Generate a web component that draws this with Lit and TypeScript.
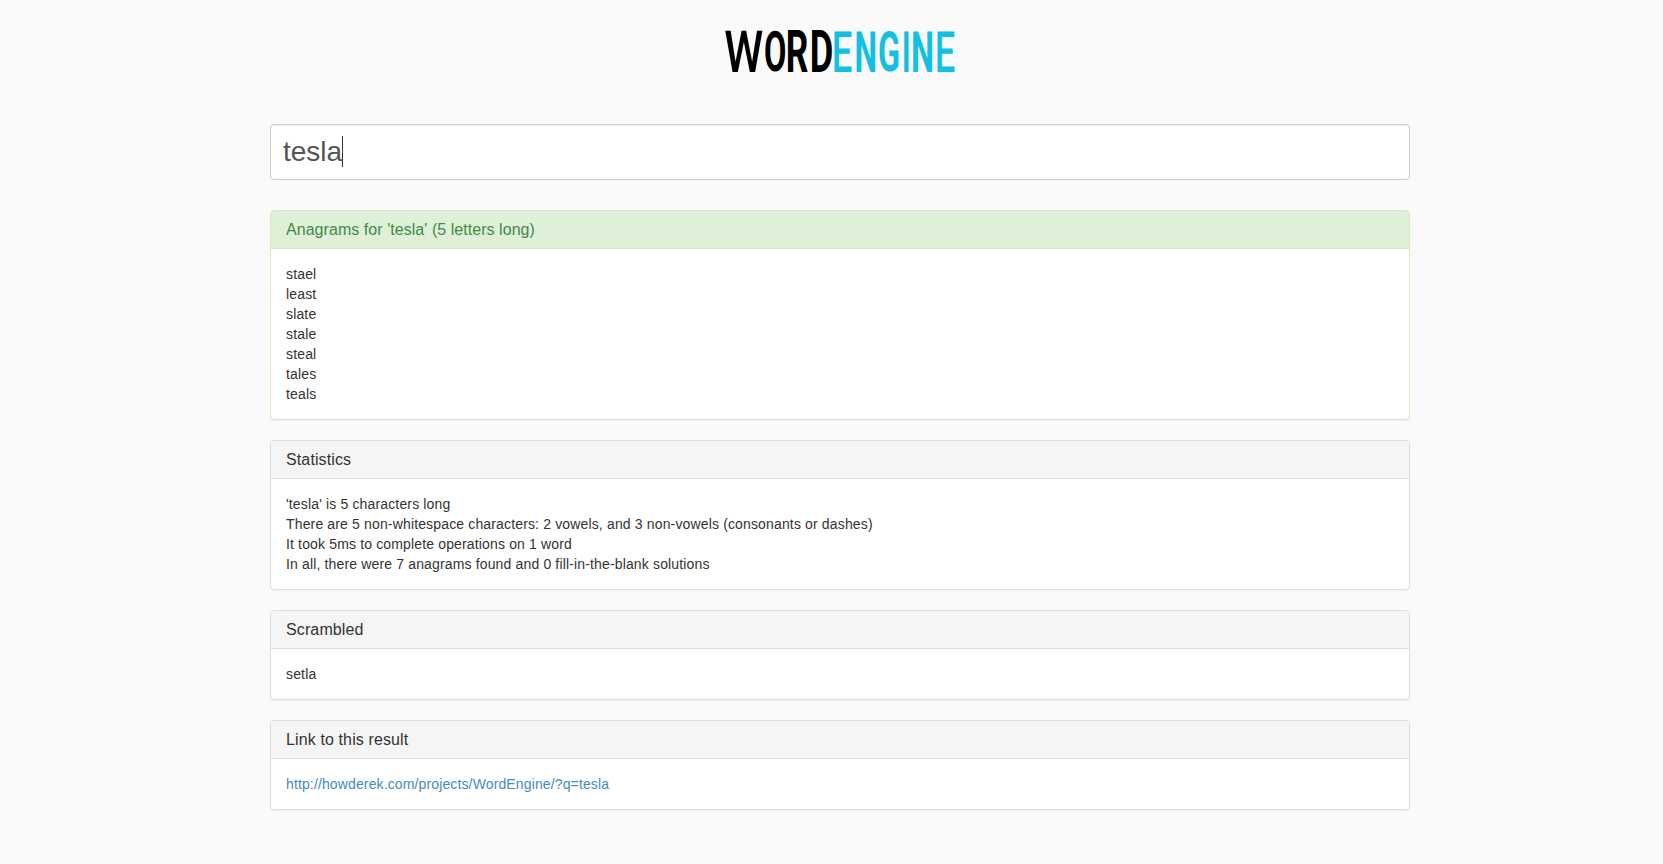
import { LitElement, html, svg, css } from "lit";
import { customElement, property } from "lit/decorators.js";

// Each glyph: character, weight, left edge, drawn width, top edge and bottom edge.
type Glyph = [string, number, number, number, number, number];
const DARK: Glyph[] = [
  ["W", 500, 0, 38, 1.3, 43],
  ["O", 700, 40, 20.3, 1, 43],
  ["R", 700, 63, 19.8, 0.6, 43],
  ["D", 700, 87, 19.8, 0.6, 43],
];
const BRIGHT: Glyph[] = [
  ["E", 500, 109, 17.7, 1.6, 42.6],
  ["N", 700, 131.4, 19, 1.6, 42.6],
  ["G", 700, 154, 19.7, 1.2, 42.8],
  ["I", 700, 178.9, 5, 1.6, 42.6],
  ["N", 700, 188.1, 19.4, 1.6, 42.6],
  ["E", 500, 212, 17.6, 1.6, 42.6],
];
const pen = document.createElement("canvas").getContext("2d")!;

@customElement("word-logo")
class WordLogo extends LitElement {
  static styles = css`
    :host { display: block; width: 230px; height: 46px; }
    svg { display: block; overflow: visible; }
    text { font-family: Roboto, "Liberation Sans", sans-serif; font-size: 58px; text-rendering: geometricPrecision; }
    .dark { fill: #000; }
    .bright { fill: #14c0e2; }
  `;
  glyphs(list: Glyph[]) {
    return list.map(([ch, weight, x, w, top, bottom]) => {
      // Measured large, then reduced to the 58px drawing size for precise ink bounds.
      pen.font = `${weight} 580px Roboto, "Liberation Sans", sans-serif`;
      const m = pen.measureText(ch);
      const left = -m.actualBoundingBoxLeft / 10;
      const right = m.actualBoundingBoxRight / 10;
      const up = m.actualBoundingBoxAscent / 10;
      const down = m.actualBoundingBoxDescent / 10;
      const sx = w / (right - left);
      const sy = (bottom - top) / (up + down);
      return svg`<text font-weight=${weight}
        transform="translate(${x - left * sx} ${bottom - down * sy}) scale(${sx} ${sy})">${ch}</text>`;
    });
  }
  render() {
    return html`<svg width="230" height="46" viewBox="0 0 230 46" role="img" aria-label="WordEngine">
      <g class="dark">${this.glyphs(DARK)}</g>
      <g class="bright">${this.glyphs(BRIGHT)}</g>
    </svg>`;
  }
}

@customElement("result-panel")
class ResultPanel extends LitElement {
  @property() heading = "";
  @property({ type: Boolean, reflect: true }) success = false;
  static styles = css`
    :host {
      display: block;
      box-sizing: border-box;
      border: 1px solid #ddd;
      border-radius: 4px;
      background: #fff;
      box-shadow: 0 1px 1px rgba(0, 0, 0, 0.05);
    }
    .heading {
      padding: 10px 15px;
      border-bottom: 1px solid #ddd;
      border-radius: 3px 3px 0 0;
      background: #f5f5f5;
      color: #333;
      font-size: 16px;
      line-height: 17px;
      letter-spacing: 0.12px;
    }
    .body { padding: 15px; }
    :host([success]) { border-color: #d6e9c6; }
    :host([success]) .heading {
      border-color: #d6e9c6;
      background: #dff0d8;
      color: #468847;
      letter-spacing: 0.05px;
    }
  `;
  render() {
    return html`<div class="heading">${this.heading}</div><div class="body"><slot></slot></div>`;
  }
}

@customElement("app-root")
class AppRoot extends LitElement {
  static styles = css`
    :host {
      display: block;
      box-sizing: border-box;
      min-height: 864px;
      padding: 29px 253px 0 270px;
      background: #fafafa;
      color: #333;
      font: 14px/20px "Liberation Sans", Arial, sans-serif;
    }
    word-logo { margin: 0 auto; }
    .logo-row { display: flex; padding-bottom: 49px; }
    .search {
      display: flex;
      align-items: center;
      box-sizing: border-box;
      height: 56px;
      padding: 0 12px;
      border: 1px solid #ccc;
      border-radius: 4px;
      background: #fff;
      box-shadow: inset 0 1px 1px rgba(0, 0, 0, 0.075);
      color: #555;
      font-size: 28px;
      line-height: 32px;
    }
    .caret { width: 1px; height: 31px; background: #333; margin-top: -1px; }
    .results { display: flex; flex-direction: column; gap: 20px; padding-top: 30px; }
    .results div { letter-spacing: 0.15px; }
    a { color: #428bca; text-decoration: none; letter-spacing: 0.13px; }
  `;
  words = ["stael", "least", "slate", "stale", "steal", "tales", "teals"];
  stats = [
    "'tesla' is 5 characters long",
    "There are 5 non-whitespace characters: 2 vowels, and 3 non-vowels (consonants or dashes)",
    "It took 5ms to complete operations on 1 word",
    "In all, there were 7 anagrams found and 0 fill-in-the-blank solutions",
  ];
  render() {
    return html`
      <div class="logo-row"><word-logo></word-logo></div>
      <div class="search"><span class="query">tesla</span><span class="caret"></span></div>
      <div class="results">
        <result-panel success heading="Anagrams for 'tesla' (5 letters long)">
          ${this.words.map((w) => html`<div>${w}</div>`)}
        </result-panel>
        <result-panel heading="Statistics">${this.stats.map((s) => html`<div>${s}</div>`)}</result-panel>
        <result-panel heading="Scrambled"><div>setla</div></result-panel>
        <result-panel heading="Link to this result">
          <a href="http://howderek.com/projects/WordEngine/?q=tesla">http://howderek.com/projects/WordEngine/?q=tesla</a>
        </result-panel>
      </div>
    `;
  }
}
